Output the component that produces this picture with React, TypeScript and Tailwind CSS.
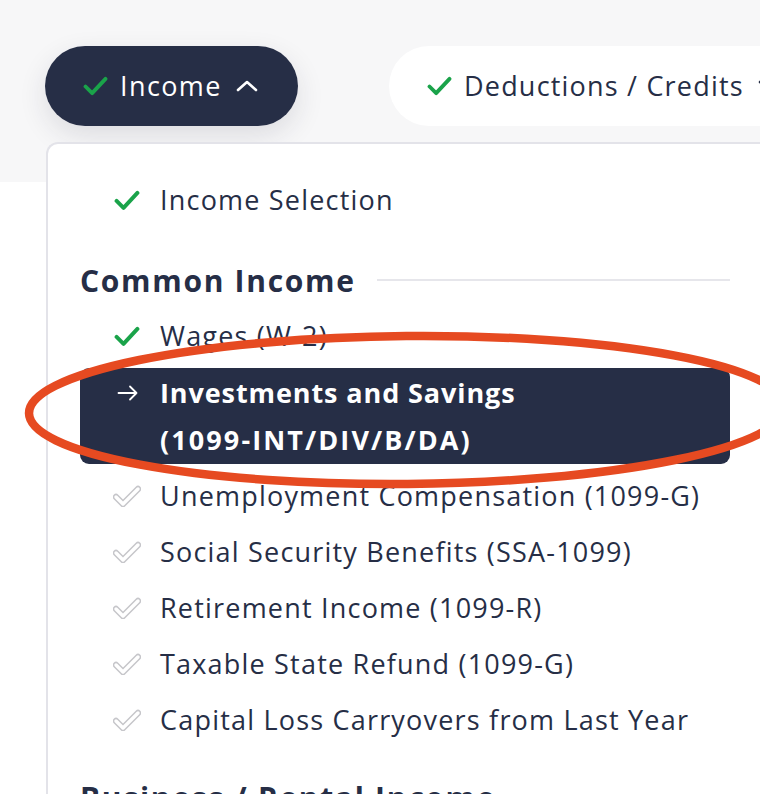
import React from "react";

type Item = {
  label: string;
  state: "done" | "todo" | "current";
};

const items: Item[] = [
  {label: "Wages (W-2)", state: "done"},
  {label: "Investments and Savings (1099-INT/DIV/B/DA)", state: "current"},
  {label: "Unemployment Compensation (1099-G)", state: "todo"},
  {label: "Social Security Benefits (SSA-1099)", state: "todo"},
  {label: "Retirement Income (1099-R)", state: "todo"},
  {label: "Taxable State Refund (1099-G)", state: "todo"},
  {label: "Capital Loss Carryovers from Last Year", state: "todo"},
];

const GreenCheck = ({size = 26}: {size?: number}) => (
  <svg width={size} height={size * 0.8} viewBox="0 0 26 21" fill="none">
    <path
      d="M2.5 11 L9.5 18 L23.5 3"
      stroke="#1aa34a"
      strokeWidth="4"
      strokeLinecap="round"
      strokeLinejoin="round"
    />
  </svg>
);

const GrayCheck = () => (
  <svg width="28" height="22" viewBox="0 0 28 22" fill="none">
    <path
      d="M3 12 L10 19 L25 4"
      stroke="#c6c6ca"
      strokeWidth="6.4"
      strokeLinecap="round"
      strokeLinejoin="round"
    />
    <path
      d="M3 12 L10 19 L25 4"
      stroke="#ffffff"
      strokeWidth="3.4"
      strokeLinecap="round"
      strokeLinejoin="round"
    />
  </svg>
);

const ArrowRight = () => (
  <svg width="22" height="16" viewBox="0 0 22 16" fill="none">
    <path
      d="M1.5 8 H19.5 M13 1.5 L19.5 8 L13 14.5"
      stroke="#ffffff"
      strokeWidth="1.8"
      strokeLinecap="round"
      strokeLinejoin="round"
    />
  </svg>
);

const Chevron = ({up, color}: {up: boolean; color: string}) => (
  <svg width="22" height="12" viewBox="0 0 22 12" fill="none">
    <path
      d={up ? "M2 10 L11 2 L20 10" : "M2 2 L11 10 L20 2"}
      stroke={color}
      strokeWidth="2.6"
      strokeLinecap="round"
      strokeLinejoin="round"
    />
  </svg>
);

const MenuRow = ({item}: {item: Item}) => {
  if (item.state === "current") {
    const [first, second] = ["Investments and Savings", "(1099-INT/DIV/B/DA)"];
    return (
      <li className="py-1">
        <div className="flex items-start rounded-[9px] bg-[#262e46] py-[1px] pl-[37px] text-white">
          <div className="flex h-[47px] w-[23px] items-center">
            <ArrowRight />
          </div>
          <div className="ml-[20px] text-[27px] font-bold leading-[47px]">
            <div className="tracking-[0.9px]">{first}</div>
            <div className="tracking-[2.1px]">{second}</div>
          </div>
        </div>
      </li>
    );
  }
  return (
    <li className="py-1">
      <div className="flex h-[48px] items-center pl-[33px]">
        <div className="flex w-[28px] items-center justify-center">
          {item.state === "done" ? <GreenCheck /> : <GrayCheck />}
        </div>
        <span className="ml-[19px] whitespace-nowrap text-[27px] leading-[48px] tracking-[1.2px] text-[#262e46]">
          {item.label}
        </span>
      </div>
    </li>
  );
};

export default function App() {
  return (
    <div
      className="relative h-[794px] w-[760px] overflow-hidden bg-white"
      style={{fontFamily: '"Open Sans", "Noto Sans", sans-serif'}}
    >
      <div className="h-[182px] bg-[#f7f7f8] pl-[45px] pt-[46px]">
        <div className="flex gap-[91px] whitespace-nowrap">
          <button className="flex h-[80px] w-[253px] shrink-0 items-center rounded-full bg-[#262e46] pl-[38px] shadow-[0_10px_28px_rgba(30,35,60,0.12)]">
            <GreenCheck size={25} />
            <span className="ml-[12px] text-[27px] font-medium tracking-[1.4px] text-white">
              Income
            </span>
            <span className="ml-[14px]">
              <Chevron up color="#ffffff" />
            </span>
          </button>
          <button className="flex h-[80px] w-[420px] shrink-0 items-center rounded-full bg-white pl-[38px]">
            <GreenCheck size={25} />
            <span className="ml-[12px] text-[27px] font-medium tracking-[1.2px] text-[#262e46]">
              Deductions / Credits
            </span>
            <span className="ml-[14px]">
              <Chevron up={false} color="#262e46" />
            </span>
          </button>
        </div>
      </div>

      <div className="relative -mt-[40px] ml-[46px] w-[740px] rounded-tl-[12px] border-l-[2px] border-t-[2px] border-[#e3e3e9] bg-white pl-[32px] pt-[28px]">
        <div className="w-[650px]">
          <ul>
            <li className="py-1">
              <div className="flex h-[48px] items-center pl-[33px]">
                <div className="flex w-[28px] items-center justify-center">
                  <GreenCheck />
                </div>
                <span className="ml-[19px] text-[27px] leading-[48px] tracking-[1.2px] text-[#262e46]">
                  Income Selection
                </span>
              </div>
            </li>
          </ul>

          <div className="mt-[32px] mb-[8px] flex h-[40px] items-center gap-[21px]">
            <h2 className="text-[30px] font-bold tracking-[1.7px] text-[#262e46]">
              Common Income
            </h2>
            <div className="h-[2px] flex-1 bg-[#e6e6eb]" />
          </div>

          <ul>
            {items.map((item) => (
              <MenuRow key={item.label} item={item} />
            ))}
          </ul>

          <div className="mt-[29px] flex h-[40px] items-center gap-[21px]">
            <h2 className="whitespace-nowrap text-[30px] font-bold tracking-[1.7px] text-[#262e46]">
              Business / Rental Income
            </h2>
            <div className="h-[2px] flex-1 bg-[#e6e6eb]" />
          </div>
        </div>
      </div>

      {/* hand-drawn annotation over the current step */}
      <svg
        className="pointer-events-none absolute left-0 top-0"
        width="760"
        height="794"
        viewBox="0 0 760 794"
        fill="none"
      >
        <ellipse
          cx="407"
          cy="410"
          rx="378"
          ry="74"
          transform="rotate(-0.5 407 410)"
          stroke="#e64a21"
          strokeWidth="8.5"
        />
      </svg>
    </div>
  );
}
